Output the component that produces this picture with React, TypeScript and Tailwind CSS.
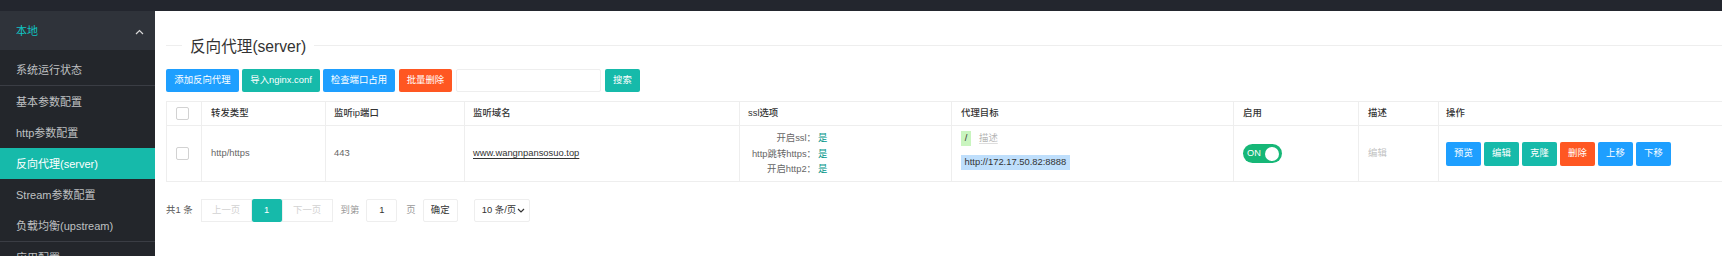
import React from "react";

const menu = ["基本参数配置", "http参数配置", "反向代理(server)", "Stream参数配置", "负载均衡(upstream)"];

const ops = [
  { label: "预览", color: "bg-[#1e9fff]" },
  { label: "编辑", color: "bg-[#16baaa]" },
  { label: "克隆", color: "bg-[#16baaa]" },
  { label: "删除", color: "bg-[#ff5722]" },
  { label: "上移", color: "bg-[#1e9fff]" },
  { label: "下移", color: "bg-[#1e9fff]" },
];

function Checkbox() {
  return <div className="w-[13px] h-[13px] rounded-[2px] border border-[#d2d2d2] bg-white" />;
}

function Sidebar() {
  return (
    <aside className="w-[155px] shrink-0 bg-[#23262b] overflow-hidden">
      <div className="h-[39px] bg-[#2f333a] flex items-center justify-between pl-4 pr-[11px] pt-[2px] text-[11px] text-[#10c4c4]">
        <span>本地</span>
        <svg width="9" height="6" viewBox="0 0 9 6" fill="none">
          <polyline points="1,5 4.5,1.5 8,5" stroke="#d8d8d8" strokeWidth="1.2" />
        </svg>
      </div>
      <div className="pt-[5px]">
        <div className="h-[30px] flex items-center pl-4 text-[11px] text-[#bfc0c2]">系统运行状态</div>
      </div>
      <div className="border-t border-[#3a3d44]">
        {menu.map((m) => (
          <div
            key={m}
            className={
              m === "反向代理(server)"
                ? "h-[31px] flex items-center pl-4 pt-px text-[11px] text-white bg-[#16baaa]"
                : "h-[31px] flex items-center pl-4 pt-px text-[11px] text-[#bfc0c2]"
            }
          >
            {m}
          </div>
        ))}
      </div>
      <div className="border-t border-[#3a3d44]">
        <div className="h-[31px] flex items-center pl-4 pt-[2px] text-[11px] text-[#bfc0c2]">应用配置</div>
      </div>
    </aside>
  );
}

function Toolbar() {
  const btn = "inline-flex items-center justify-center h-[23px] rounded-[2px] text-white text-[9.4px]";
  return (
    <div className="mt-[14px] flex items-center">
      <button className={`${btn} w-[73px] bg-[#1e9fff]`}>添加反向代理</button>
      <button className={`${btn} w-[78px] ml-[3px] bg-[#16baaa]`}>导入nginx.conf</button>
      <button className={`${btn} w-[72px] ml-[3px] bg-[#1e9fff]`}>检查端口占用</button>
      <button className={`${btn} w-[53px] ml-[4px] bg-[#ff5722]`}>批量删除</button>
      <input className="ml-[4px] w-[145px] h-[23px] border border-[#eee] rounded-[2px] outline-none" />
      <button className={`${btn} w-[35px] ml-[4px] bg-[#16baaa]`}>搜索</button>
    </div>
  );
}

function DataTable() {
  const th = "h-[24px] border border-[#eee] px-[8px] text-left align-middle font-medium text-[#333] text-[9.4px]";
  const td = "h-[56px] border border-[#eee] px-[8px] align-middle text-[#666] text-[9.4px]";
  return (
    <table className="mt-[9px] table-fixed border-collapse w-[1572px]">
      <colgroup>
        <col className="w-[35px]" />
        <col className="w-[124px]" />
        <col className="w-[139px]" />
        <col className="w-[275px]" />
        <col className="w-[212px]" />
        <col className="w-[282px]" />
        <col className="w-[125px]" />
        <col className="w-[80px]" />
        <col className="w-[300px]" />
      </colgroup>
      <thead>
        <tr>
          <th className={`${th} pl-[9px]`}>
            <Checkbox />
          </th>
          <th className={`${th} pl-[9px]`}>转发类型</th>
          <th className={th}>监听ip端口</th>
          <th className={th}>监听域名</th>
          <th className={th}>ssl选项</th>
          <th className={`${th} pl-[9px]`}>代理目标</th>
          <th className={`${th} pl-[9px]`}>启用</th>
          <th className={`${th} pl-[9px]`}>描述</th>
          <th className={`${th} pl-[7px]`}>操作</th>
        </tr>
      </thead>
      <tbody>
        <tr>
          <td className={`${td} pl-[9px]`}>
            <Checkbox />
          </td>
          <td className={`${td} pl-[9px]`}>http/https</td>
          <td className={td}>443</td>
          <td className={td}>
            <span className="text-[#333] underline underline-offset-2">www.wangnpansosuo.top</span>
          </td>
          <td className={td}>
            <div className="grid grid-cols-[68px_auto] gap-x-[2px] leading-[15.5px]">
              <span className="text-right">开启ssl：</span>
              <span className="text-[#009688]">是</span>
              <span className="text-right">http跳转https：</span>
              <span className="text-[#009688]">是</span>
              <span className="text-right">开启http2：</span>
              <span className="text-[#009688]">是</span>
            </div>
          </td>
          <td className={`${td} pl-[9px] align-top pt-[5px]`}>
            <div className="flex items-center h-[15px]">
              <span className="h-[15px] w-[10px] flex items-center justify-center bg-[#c9f5bf] text-[#333]">/</span>
              <span className="ml-[8px] text-[#b5b5b5] underline decoration-[#ddd] underline-offset-2">描述</span>
            </div>
            <div className="mt-[9px] inline-flex items-center h-[15px] px-[3.5px] bg-[#bfdffc] text-[#333]">
              http://172.17.50.82:8888
            </div>
          </td>
          <td className={`${td} pl-[9px]`}>
            <div className="w-[39px] h-[19px] rounded-full bg-[#16b777] flex items-center justify-between pl-[4px] pr-[3px]">
              <span className="text-white text-[9.2px]">ON</span>
              <span className="w-[14px] h-[14px] rounded-full bg-white" />
            </div>
          </td>
          <td className={`${td} pl-[9px] text-[#c2c2c2]`}>编辑</td>
          <td className={`${td} pl-[7px]`}>
            <div className="flex gap-[3px]">
              {ops.map((o) => (
                <span
                  key={o.label}
                  className={`${o.color} w-[35px] h-[24px] rounded-[2px] flex items-center justify-center text-white text-[9.4px]`}
                >
                  {o.label}
                </span>
              ))}
            </div>
          </td>
        </tr>
      </tbody>
    </table>
  );
}

function Pager() {
  return (
    <div className="mt-[17px] flex items-center h-[23px] text-[9.4px]">
      <span className="text-[#555] mr-[8px]">共1 条</span>
      <span className="w-[51px] h-[23px] border border-[#eee] flex items-center justify-center text-[#d2d2d2]">上一页</span>
      <span className="w-[30px] h-[23px] bg-[#16baaa] flex items-center justify-center text-white rounded-[2px]">1</span>
      <span className="w-[51px] h-[23px] border border-[#eee] flex items-center justify-center text-[#d2d2d2]">下一页</span>
      <span className="ml-[8px] text-[#999]">到第</span>
      <span className="ml-[7px] w-[31px] h-[23px] border border-[#eee] rounded-[2px] flex items-center justify-center text-[#333]">1</span>
      <span className="ml-[9px] text-[#999]">页</span>
      <span className="ml-[7px] w-[35px] h-[23px] border border-[#eee] rounded-[2px] flex items-center justify-center text-[#333]">确定</span>
      <span className="ml-[16px] w-[56px] h-[23px] border border-[#eee] rounded-[2px] flex items-center justify-between pl-[7px] pr-[4px] text-[#333]">
        10 条/页
        <svg width="8" height="5" viewBox="0 0 8 5" fill="none">
          <polyline points="1,1 4,4 7,1" stroke="#333" strokeWidth="1.2" />
        </svg>
      </span>
    </div>
  );
}

export default function App() {
  return (
    <div className="w-[1722px] h-[256px] overflow-hidden bg-white font-['Liberation_Sans','Noto_Sans_CJK_SC',sans-serif]">
      <div className="h-[11px] bg-[#23262e]" />
      <div className="flex h-[245px]">
        <Sidebar />
        <main className="flex-1 min-w-0 overflow-hidden pl-[11px] pt-[24px]">
          <div className="flex items-center h-[20px]">
            <div className="w-[16px] h-px bg-[#eee]" />
            <span className="px-[8px] pt-[3px] text-[15.6px] text-[#333]">反向代理(server)</span>
            <div className="flex-1 h-px bg-[#eee]" />
          </div>
          <Toolbar />
          <DataTable />
          <Pager />
        </main>
      </div>
    </div>
  );
}
